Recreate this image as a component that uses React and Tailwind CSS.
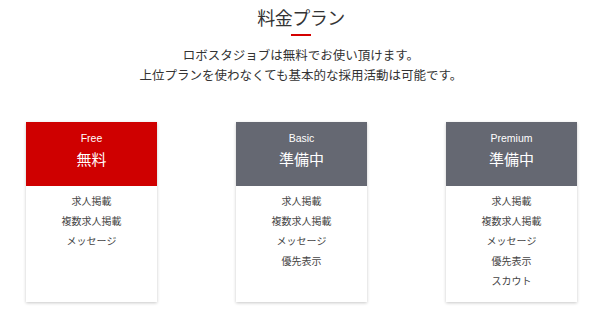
const plans = [
  { name: "Free", label: "無料", color: "bg-[#cf0000]", features: ["求人掲載", "複数求人掲載", "メッセージ"] },
  { name: "Basic", label: "準備中", color: "bg-[#656872]", features: ["求人掲載", "複数求人掲載", "メッセージ", "優先表示"] },
  { name: "Premium", label: "準備中", color: "bg-[#656872]", features: ["求人掲載", "複数求人掲載", "メッセージ", "優先表示", "スカウト"] },
];

function PlanCard({ plan }) {
  return (
    <div className="w-[131px] h-[180px] bg-white shadow-[0_1px_3px_rgba(0,0,0,0.22)] flex flex-col">
      <div className={`${plan.color} h-[64px] flex flex-col items-center pt-[9px] text-white`}>
        <span className="text-[10.5px] leading-[14px]">{plan.name}</span>
        <span className="text-[15px] leading-[20px] mt-[5px]">{plan.label}</span>
      </div>
      <ul className="flex flex-col items-center pt-[6px] text-[10px] leading-[20px] text-[#444]">
        {plan.features.map((f) => (
          <li key={f}>{f}</li>
        ))}
      </ul>
    </div>
  );
}

export default function App() {
  return (
    <div
      className="w-[600px] h-[313px] bg-white overflow-hidden"
      style={{ fontFamily: '"Liberation Sans", "Noto Sans CJK JP", sans-serif' }}
    >
      <div className="flex flex-col items-center pt-[7px] pl-[2px]">
        <h1 className="text-[18px] leading-[24px] text-[#333] tracking-[-0.5px]">料金プラン</h1>
        <div className="w-[20px] h-[2px] bg-[#d40000] mt-[3px]" />
        <p className="mt-[10px] text-[12.5px] leading-[20px] text-[#333] text-center">
          ロボスタジョブは無料でお使い頂けます。
          <br />
          上位プランを使わなくても基本的な採用活動は可能です。
        </p>
      </div>
      <div className="flex gap-[79px] pl-[26px] mt-[36px]">
        {plans.map((p) => (
          <PlanCard key={p.name} plan={p} />
        ))}
      </div>
    </div>
  );
}
